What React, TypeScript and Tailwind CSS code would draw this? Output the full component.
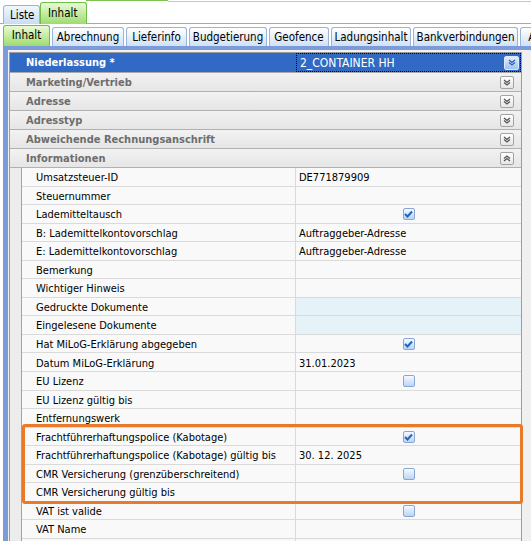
import React from 'react';

const FONT = { fontFamily: '"DejaVu Sans Condensed", "DejaVu Sans", sans-serif' };

const innerTabs = [
  { label: 'Inhalt', w: 'w-[47px]', active: true },
  { label: 'Abrechnung', w: 'w-[72px]' },
  { label: 'Lieferinfo', w: 'w-[61px]' },
  { label: 'Budgetierung', w: 'w-[78px]' },
  { label: 'Geofence', w: 'w-[60px]' },
  { label: 'Ladungsinhalt', w: 'w-[80px]' },
  { label: 'Bankverbindungen', w: 'w-[105px]' },
  { label: 'An', w: 'w-[30px]' },
];

const categories = ['Marketing/Vertrieb', 'Adresse', 'Adresstyp', 'Abweichende Rechnungsanschrift', 'Informationen'];

type Row = { label: string; value?: string; check?: boolean | 'off'; tint?: boolean };

const rows: Row[] = [
  { label: 'Umsatzsteuer-ID', value: 'DE771879909' },
  { label: 'Steuernummer' },
  { label: 'Lademitteltausch', check: true },
  { label: 'B: Lademittelkontovorschlag', value: 'Auftraggeber-Adresse' },
  { label: 'E: Lademittelkontovorschlag', value: 'Auftraggeber-Adresse' },
  { label: 'Bemerkung' },
  { label: 'Wichtiger Hinweis' },
  { label: 'Gedruckte Dokumente', tint: true },
  { label: 'Eingelesene Dokumente', tint: true },
  { label: 'Hat MiLoG-Erklärung abgegeben', check: true },
  { label: 'Datum MiLoG-Erklärung', value: '31.01.2023' },
  { label: 'EU Lizenz', check: 'off' },
  { label: 'EU Lizenz gültig bis' },
  { label: 'Entfernungswerk' },
  { label: 'Frachtführerhaftungspolice (Kabotage)', check: true },
  { label: 'Frachtführerhaftungspolice (Kabotage) gültig bis', value: '30. 12. 2025' },
  { label: 'CMR Versicherung (grenzüberschreitend)', check: 'off' },
  { label: 'CMR Versicherung gültig bis' },
  { label: 'VAT ist valide', check: 'off' },
  { label: 'VAT Name' },
  { label: '' },
];

function CheckBox({ checked }: { checked: boolean }) {
  return (
    <div className="w-[12px] h-[12px] rounded-[2px] border border-[#86a7d4] bg-gradient-to-b from-[#f5f9ff] to-[#bcd5f3] flex items-center justify-center">
      {checked && (
        <svg width="9" height="8" viewBox="0 0 9 8">
          <path d="M1 4 L3.5 6.5 L8 1.5" fill="none" stroke="#2363c4" strokeWidth="2" />
        </svg>
      )}
    </div>
  );
}

function CatButton({ up }: { up?: boolean }) {
  return (
    <div className="w-[14px] h-[13px] rounded-[2px] border border-[#a3a3a3] bg-gradient-to-b from-white to-[#e6e6e6] flex items-center justify-center">
      <svg width="8" height="7" viewBox="0 0 8 7" className={up ? 'rotate-180' : ''}>
        <path d="M1 1 L4 3.5 L7 1 M1 3.5 L4 6 L7 3.5" fill="none" stroke="#555" strokeWidth="1.3" />
      </svg>
    </div>
  );
}

export default function App() {
  return (
    <div className="w-[531px] h-[541px] overflow-hidden bg-white relative text-[11px] text-black" style={FONT}>
      {/* top edge */}
      <div className="flex h-[2px]">
        <div className="w-[86px]" />
        <div className="w-[82px] border-t border-[#7cc34f]" />
        <div className="flex-1 border-b border-[#c8c8c8]" />
      </div>

      {/* outer tabs */}
      <div className="flex items-end h-[22px] border-b border-[#a9a9a9] pl-[3px] text-[11.5px]">
        <div className="w-[37px] h-[19px] mb-[-1px] rounded-t-[3px] border border-[#9ab4d8] border-b-0 bg-gradient-to-b from-[#f1f7fe] to-[#c7dcf4] flex items-center pl-[6px] pt-[2px]">
          Liste
        </div>
        <div className="w-[47px] h-[22px] mb-[-1px] rounded-t-[3px] border border-[#6fbe45] border-b-0 bg-gradient-to-b from-[#e8fad5] to-[#9edc6c] flex items-center pl-[7px]">
          Inhalt
        </div>
      </div>

      {/* inner tabs */}
      <div className="flex items-end h-[22px] pl-[3px] gap-[2px] bg-white text-[11.5px]">
        {innerTabs.map((t) =>
          t.active ? (
            <div
              key={t.label}
              className={`${t.w} shrink-0 h-[21px] rounded-t-[3px] border border-[#6fbe45] border-b-0 bg-gradient-to-b from-[#e8fad5] to-[#9edc6c] flex items-center justify-center`}
            >
              {t.label}
            </div>
          ) : (
            <div
              key={t.label}
              className={`${t.w} shrink-0 h-[19px] rounded-t-[3px] border border-[#9ab4d8] border-b-0 bg-gradient-to-b from-white to-[#cfe1f6] flex items-center justify-center pt-[1px] whitespace-nowrap`}
            >
              {t.label}
            </div>
          ),
        )}
      </div>

      {/* panel */}
      <div className="ml-[3px] border-l-[5px] border-t-[4px] border-[#7c9bdb] bg-[#f0f0f0] pt-[2px] pl-[1px]">
        <div className="w-[513px] border-t border-l border-r border-[#9c9c9c] bg-white">
          {/* selected row */}
          <div className="flex h-[20px] border-b border-[#a8a8a8] bg-[#316ac5] text-white font-bold">
            <div className="w-[286px] flex items-center pl-[16px] pt-[1px]">Niederlassung *</div>
            <div className="flex-1 flex items-center justify-between border border-dotted border-white outline outline-1 outline-dotted outline-black -outline-offset-1 pl-[3px] pr-[1px] font-normal text-[12px]">
              <span className="pt-[1px]">2_CONTAINER HH</span>
              <div className="w-[15px] h-[14px] rounded-[2px] border border-[#dbe8f8] bg-gradient-to-b from-[#e3eefb] to-[#9fc2ee] flex items-center justify-center">
                <svg width="8" height="7" viewBox="0 0 8 7">
                  <path d="M1 1 L4 3.5 L7 1 M1 3.5 L4 6 L7 3.5" fill="none" stroke="#2a63c0" strokeWidth="1.3" />
                </svg>
              </div>
            </div>
          </div>

          {/* categories */}
          {categories.map((c, i) => (
            <div key={c} className="flex items-center justify-between h-[19px] border-b border-[#b1b1b1] bg-gradient-to-b from-[#f2f2f2] to-[#e6e6e6] pl-[16px] pr-[7px] font-bold text-[#6d6d6d]">
              <span className="pt-[2px]">{c}</span>
              <CatButton up={i === categories.length - 1} />
            </div>
          ))}

          {/* data rows */}
          {rows.map((r, i) => (
            <div key={i} className="flex h-[18.55px]">
              <div className="w-[12px] bg-[#ececec] border-r border-[#a3a3a3]" />
              <div className="w-[274px] flex items-center pl-[14px] pt-[3px] bg-[#f9f9f9] border-b border-r border-[#dadada] whitespace-nowrap">
                {r.label}
              </div>
              <div className={`flex-1 flex items-center pl-[3px] border-b border-[#dadada] ${r.tint ? 'bg-[#e5f3f9]' : 'bg-[#f9f9f9]'}`}>
                {r.value && <span className="pt-[3px]">{r.value}</span>}
                {r.check !== undefined && (
                  <div className="flex-1 flex justify-center pr-[3px] pt-[1px]">
                    <CheckBox checked={r.check === true} />
                  </div>
                )}
              </div>
            </div>
          ))}
        </div>
      </div>

      {/* highlight */}
      <div className="absolute left-[22px] top-[424px] w-[501px] h-[80px] border-[3.5px] border-[#e97a2b] rounded-[3px]" />
    </div>
  );
}
